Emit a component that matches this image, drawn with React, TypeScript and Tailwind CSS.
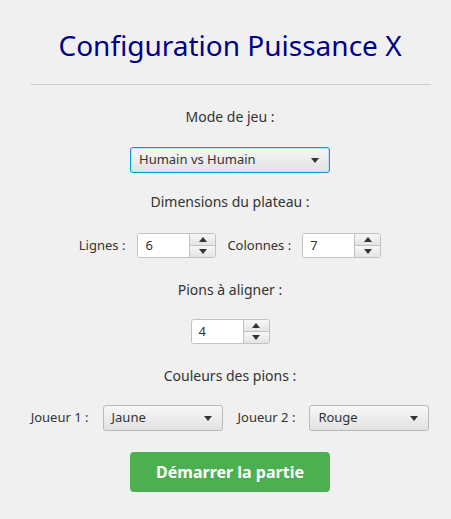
import React, { useState } from 'react';

const font = { fontFamily: '"Noto Sans", "Open Sans", sans-serif' };

const Arrow: React.FC<{ up?: boolean; className?: string }> = ({ up, className }) => (
  <svg width="8" height="5" viewBox="0 0 8 5" className={className}>
    {up ? <polygon points="0,5 8,5 4,0" fill="#333" /> : <polygon points="0,0 8,0 4,5" fill="#333" />}
  </svg>
);

interface ComboProps {
  value: string;
  width: string;
  focused?: boolean;
}

const Combo: React.FC<ComboProps> = ({ value, width, focused }) => (
  <div
    className={`${width} h-[26px] flex items-center justify-between pl-[8px] pr-[9px] rounded-[3px] bg-gradient-to-b from-[#f7f7f7] to-[#e2e2e2] text-[13px] text-[#333] ${
      focused ? 'border border-[#039ed3] shadow-[inset_0_0_0_1px_#b6e2f3]' : 'border border-[#b9b9b9]'
    }`}
  >
    <span>{value}</span>
    <Arrow className="mr-[1px]" />
  </div>
);

const Spinner: React.FC<{ value: number }> = ({ value }) => (
  <div className="flex w-[79px] h-[25px] rounded-[3px] border border-[#c2c2c2] overflow-hidden">
    <div className="flex-1 bg-white flex items-center pl-[7px] text-[13px] text-[#333]">{value}</div>
    <div className="w-[26px] flex flex-col border-l border-[#c2c2c2]">
      <div className="flex-1 flex items-center justify-center bg-gradient-to-b from-[#f7f7f7] to-[#e4e4e4] border-b border-[#c2c2c2]">
        <Arrow up />
      </div>
      <div className="flex-1 flex items-center justify-center bg-gradient-to-b from-[#f7f7f7] to-[#e4e4e4]">
        <Arrow />
      </div>
    </div>
  </div>
);

const Label: React.FC<{ children: React.ReactNode; className?: string }> = ({ children, className }) => (
  <div className={`h-[18px] leading-[18px] text-[14px] text-[#333] ${className ?? ''}`}>{children}</div>
);

export default function App() {
  const [mode] = useState('Humain vs Humain');

  return (
    <div className="w-full h-[519px] bg-[#f0f0f0] pl-[9px] flex flex-col items-center" style={font}>
      <h1 className="mt-[26px] h-[38px] leading-[38px] text-[28px] text-[#00008b]">Configuration Puissance X</h1>
      <div className="mt-[20px] w-[401px] h-px bg-[#d0d0d0]" />

      <Label className="mt-[23px]">Mode de jeu :</Label>
      <div className="mt-[21px]">
        <Combo value={mode} width="w-[200px]" focused />
      </div>

      <Label className="mt-[20px]">Dimensions du plateau :</Label>
      <div className="mt-[22px] flex items-center gap-[11px]">
        <span className="text-[13px] text-[#333] mr-[1px]">Lignes :</span>
        <Spinner value={6} />
        <span className="text-[13px] text-[#333]">Colonnes :</span>
        <Spinner value={7} />
      </div>

      <Label className="mt-[23px]">Pions à aligner :</Label>
      <div className="mt-[20px]">
        <Spinner value={4} />
      </div>

      <Label className="mt-[23px]">Couleurs des pions :</Label>
      <div className="mt-[20px] flex items-center gap-[14px]">
        <span className="text-[13px] text-[#333]">Joueur 1 :</span>
        <Combo value="Jaune" width="w-[120px]" />
        <span className="text-[13px] text-[#333] ml-[1px]">Joueur 2 :</span>
        <Combo value="Rouge" width="w-[120px]" />
      </div>

      <button className="mt-[21px] w-[200px] h-[40px] rounded-[4px] bg-[#4caf50] text-white font-bold text-[16px]">
        Démarrer la partie
      </button>
    </div>
  );
}
